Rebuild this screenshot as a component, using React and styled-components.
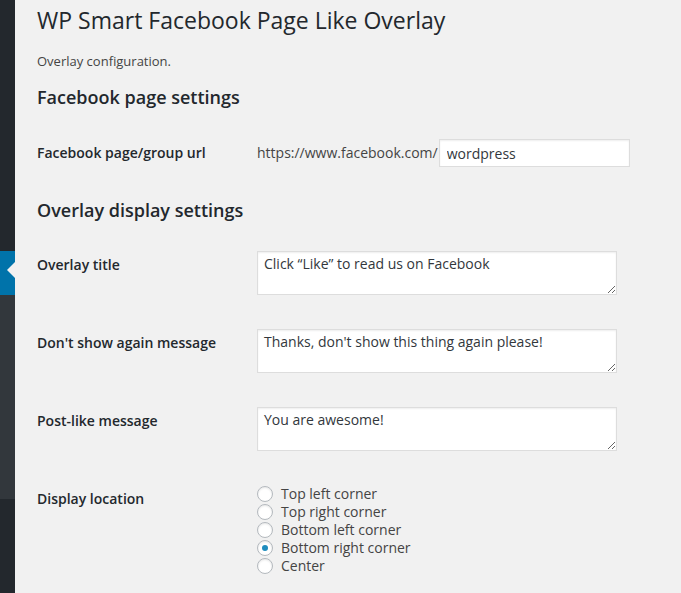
import React from 'react';
import styled, {createGlobalStyle} from "styled-components";

const GlobalStyle = createGlobalStyle`
  html, body {
    margin: 0;
    padding: 0;
    background: #f1f1f1;
  }
  body {
    font-family: "Open Sans", "Noto Sans", sans-serif;
    font-size: 14px;
    color: #444;
  }
`

const locations = [
    {id: 'top-left', label: 'Top left corner'},
    {id: 'top-right', label: 'Top right corner'},
    {id: 'bottom-left', label: 'Bottom left corner'},
    {id: 'bottom-right', label: 'Bottom right corner'},
    {id: 'center', label: 'Center'},
]

const messages = [
    {label: 'Overlay title', value: 'Click “Like” to read us on Facebook'},
    {label: "Don't show again message", value: "Thanks, don't show this thing again please!"},
    {label: 'Post-like message', value: 'You are awesome!'},
]

export default function App(){
    return (
        <>
            <GlobalStyle />
            <Layout>
                <Sidebar>
                    <MenuBlock $height={251} />
                    <CurrentItem>
                        <Arrow />
                    </CurrentItem>
                    <MenuBlock $height={204} $sub />
                    <MenuBlock $grow />
                </Sidebar>
                <Main>
                    <Title>WP Smart Facebook Page Like Overlay</Title>
                    <Intro>Overlay configuration.</Intro>

                    <SectionTitle $top={13.5}>Facebook page settings</SectionTitle>
                    <FormTable $top={15}>
                        <Row>
                            <Label>Facebook page/group url</Label>
                            <Field>
                                <UrlGroup>
                                    <span>https://www.facebook.com/</span>
                                    <TextInput type="text" defaultValue="wordpress" />
                                </UrlGroup>
                            </Field>
                        </Row>
                    </FormTable>

                    <SectionTitle $top={16}>Overlay display settings</SectionTitle>
                    <FormTable $top={14}>
                        {messages.map(m => (
                            <Row key={m.label}>
                                <Label>{m.label}</Label>
                                <Field>
                                    <TextArea defaultValue={m.value} />
                                </Field>
                            </Row>
                        ))}
                        <Row>
                            <Label>Display location</Label>
                            <Field>
                                <RadioList>
                                    {locations.map(l => (
                                        <RadioLabel key={l.id}>
                                            <Radio type="radio" name="location" value={l.id}
                                                   defaultChecked={l.id === 'bottom-right'} />
                                            {l.label}
                                        </RadioLabel>
                                    ))}
                                </RadioList>
                            </Field>
                        </Row>
                    </FormTable>
                </Main>
            </Layout>
        </>
    );
}

const Layout = styled.div`
  display: flex;
  min-height: 100vh;
`
const Sidebar = styled.div`
  width: 15px;
  flex-shrink: 0;
  display: flex;
  flex-direction: column;
  background: #23282d;
`
const MenuBlock = styled.div`
  height: ${p => p.$height ? p.$height + 'px' : 'auto'};
  flex-grow: ${p => p.$grow ? 1 : 0};
  background: ${p => p.$sub ? '#32373c' : '#23282d'};
`
const CurrentItem = styled.div`
  position: relative;
  height: 44px;
  background: #0073aa;
`
const Arrow = styled.div`
  position: absolute;
  right: 0;
  top: 11px;
  width: 0;
  height: 0;
  border-top: 8px solid transparent;
  border-bottom: 8px solid transparent;
  border-right: 8px solid #f1f1f1;
`
const Main = styled.div`
  flex: 1;
  padding-left: 22px;
`
const Title = styled.h1`
  margin: 0;
  padding: 6px 0 4px;
  font-size: 23px;
  font-weight: 400;
  line-height: 29px;
  color: #23282d;
`
const Intro = styled.p`
  margin: 13px 0 0;
  font-size: 13px;
  line-height: 19.5px;
  color: #444;
`
const SectionTitle = styled.h2`
  margin: ${p => p.$top}px 0 0;
  font-size: 18px;
  font-weight: 600;
  line-height: 24px;
  color: #23282d;
`
const FormTable = styled.div`
  margin-top: ${p => p.$top}px;
  display: flex;
  flex-direction: column;
`
const Row = styled.div`
  display: flex;
  align-items: flex-start;
`
const Label = styled.div`
  width: 210px;
  padding: 20px 10px 20px 0;
  font-size: 14px;
  font-weight: 600;
  line-height: 18px;
  color: #23282d;
`
const Field = styled.div`
  padding: 15px 0;
  line-height: 18px;
`
const UrlGroup = styled.div`
  display: flex;
  align-items: center;
  gap: 1px;
  font-size: 14px;
  color: #444;
`
const TextInput = styled.input`
  box-sizing: border-box;
  width: 191px;
  height: 28px;
  margin: 0;
  padding: 0 7px;
  border: 1px solid #ddd;
  box-shadow: inset 0 1px 2px rgba(0, 0, 0, 0.07);
  background: #fff;
  font-family: "Open Sans", "Noto Sans", sans-serif;
  font-size: 14px;
  color: #32373c;
  outline: none;
`
const TextArea = styled.textarea`
  display: block;
  box-sizing: border-box;
  width: 360px;
  height: 44px;
  margin: 0 0 4px;
  padding: 2px 6px;
  border: 1px solid #ddd;
  box-shadow: inset 0 1px 2px rgba(0, 0, 0, 0.07);
  background: #fff;
  font-family: "Open Sans", "Noto Sans", sans-serif;
  font-size: 14px;
  line-height: 1.4;
  color: #32373c;
  outline: none;
`
const RadioList = styled.div`
  display: flex;
  flex-direction: column;
`
const RadioLabel = styled.label`
  display: flex;
  align-items: center;
  gap: 8px;
  height: 18px;
  font-size: 14px;
  color: #444;
`
const Radio = styled.input`
  appearance: none;
  box-sizing: border-box;
  width: 16px;
  height: 16px;
  margin: 0;
  border: 1px solid #b4b9be;
  border-radius: 50%;
  background: #fff;
  box-shadow: inset 0 1px 2px rgba(0, 0, 0, 0.1);
  display: flex;
  align-items: center;
  justify-content: center;
  &:checked::before {
    content: "";
    width: 6px;
    height: 6px;
    border-radius: 50%;
    background: #1e8cbe;
  }
`
